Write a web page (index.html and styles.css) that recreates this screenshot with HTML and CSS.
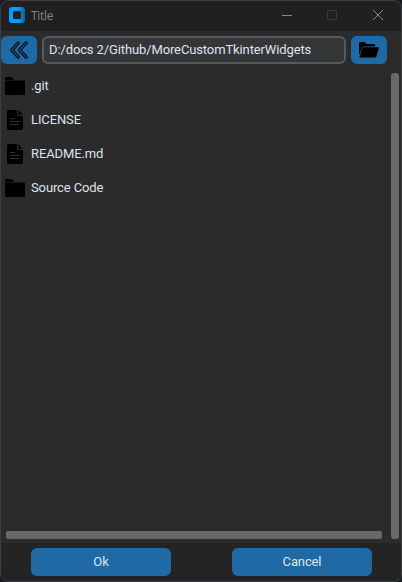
FILE: index.html
```html
<!DOCTYPE html>
<html lang="en">
<head>
<meta charset="utf-8">
<title>Title</title>
<link rel="stylesheet" href="styles.css">
</head>
<body>
<svg width="0" height="0" class="defs" aria-hidden="true">
  <symbol id="folder" viewBox="0 0 20 18"><path d="M0 1Q0 0 1 0H6.3Q7 0 7.5 .8L8.8 3H0Z"/><path d="M0 3.6H19Q20 3.6 20 4.6V17Q20 18 19 18H1Q0 18 0 17Z"/></symbol>
  <symbol id="file" viewBox="0 0 16 20"><path d="M2 0H10V4Q10 6 12 6H16V18Q16 20 14 20H2Q0 20 0 18V2Q0 0 2 0Z"/><path d="M11.2 0L16 4.8H12.2Q11.2 4.8 11.2 3.8Z"/><path d="M3 8.5H8M3 11.5H13M3 14.5H11.5" stroke="#303030" fill="none"/></symbol>
</svg>
<div class="window">
  <header class="titlebar">
    <svg class="logo" width="16" height="16" viewBox="0 0 16 16"><defs><linearGradient id="g"><stop offset=".6" stop-color="#0a9bff"/><stop offset="1" stop-color="#075da8"/></linearGradient></defs><path fill="url(#g)" fill-rule="evenodd" d="M3 0H13Q16 0 16 3V13Q16 16 13 16H3Q0 16 0 13V3Q0 0 3 0ZM5.5 4Q4 4 4 5.5V10.5Q4 12 5.5 12H10.5Q12 12 12 10.5V5.5Q12 4 10.5 4Z"/></svg>
    <span class="title">Title</span>
    <svg class="controls" width="102" height="12" viewBox="0 0 102 12" fill="none"><path d="M0 6.5H10" stroke="#858585"/><rect x="45.5" y="1.5" width="9" height="9" rx=".5" stroke="#393939"/><path d="M91 1L101 11M101 1L91 11" stroke="#8b8b8b"/></svg>
  </header>
  <div class="pathbar">
    <button class="btn icon-btn" aria-label="Back"><svg width="18" height="18" viewBox="0 0 18 18" fill="none"><g stroke-linejoin="round" stroke-linecap="round"><path d="M8.3 2L1.8 9L8.3 16M16 2L9.5 9L16 16" stroke="#05121c" stroke-width="3.4"/><path d="M8.3 2L1.8 9L8.3 16M16 2L9.5 9L16 16" stroke="#1f5f94" stroke-width="1.1"/></g></svg></button>
    <div class="entry">D:/docs 2/Github/MoreCustomTkinterWidgets</div>
    <button class="btn icon-btn" aria-label="Open"><svg width="20" height="16" viewBox="0 0 20 16"><path d="M0 1Q0 0 1 0H5.5L7.3 2H15Q16 2 16 3V4.4H4.6Q3.6 4.4 3.2 5.3L0 13Z"/><path d="M4.4 5.3H19.3Q20.2 5.3 19.9 6.2L17.2 14.5Q16.9 15.5 16 15.5H1.2Q.3 15.5 .6 14.6L3.2 6.2Q3.5 5.3 4.4 5.3Z"/></svg></button>
  </div>
  <div class="browser">
    <ul class="list">
      <li><svg width="20" height="18"><use href="#folder"/></svg><span>.git</span></li>
      <li><svg width="16" height="20"><use href="#file"/></svg><span>LICENSE</span></li>
      <li><svg width="16" height="20"><use href="#file"/></svg><span>README.md</span></li>
      <li><svg width="20" height="18"><use href="#folder"/></svg><span>Source Code</span></li>
    </ul>
    <div class="vbar"></div>
    <div class="hbar"></div>
  </div>
  <footer class="actions">
    <button class="btn">Ok</button>
    <button class="btn">Cancel</button>
  </footer>
</div>
</body>
</html>
```
FILE: styles.css
```css
* { box-sizing: border-box; }
body { margin: 0; background: #171b22; font: 13px/16px Roboto, sans-serif; letter-spacing: -.12px; color: #dce4ee; }
.defs { display: block; position: absolute; }
.window { width: 402px; height: 582px; border: 1px solid #3c3e42; border-radius: 8px; overflow: hidden; background: #2b2b2b; display: flex; flex-direction: column; }
.titlebar { height: 30px; background: #202020; display: flex; align-items: center; padding: 0 17px 2px 8px; flex: none; }
.title { font: 12px/16px "Open Sans", sans-serif; color: #858585; margin-left: 6px; letter-spacing: -.3px; padding-top: 1px; }
.controls { margin-left: auto; }
.pathbar { display: flex; gap: 5px; padding-top: 5px; height: 37px; flex: none; }
.btn { border: 0; border-radius: 6px; background: #1f6aa5; color: #dce4ee; font: inherit; letter-spacing: inherit; height: 28px; width: 140px; padding: 0; display: flex; align-items: center; justify-content: center; }
.icon-btn { width: 36px; }
.entry { width: 304px; height: 28px; border: 2px solid #565b5e; border-radius: 6px; background: #343638; padding: 4px 5px; white-space: nowrap; }
.browser { flex: 1; display: grid; grid-template-columns: 376px 8px; grid-template-rows: 1fr 8px; column-gap: 9px; padding: 5px 0 4px 5px; }
.list { list-style: none; margin: 0; padding: 0; margin-left: -1px; margin-top: -4px; }
.list li { height: 34px; display: grid; grid-template-columns: 20px 1fr; column-gap: 6px; align-items: center; }
.list svg { justify-self: center; }
.vbar { grid-row: 1 / 3; grid-column: 2; background: #696969; border-radius: 3px; }
.hbar { grid-row: 2; grid-column: 1; background: #696969; border-radius: 2px; }
.actions { height: 38px; flex: none; background: #242424; display: flex; justify-content: space-between; padding: 5px 29px 0 30px; }
```
